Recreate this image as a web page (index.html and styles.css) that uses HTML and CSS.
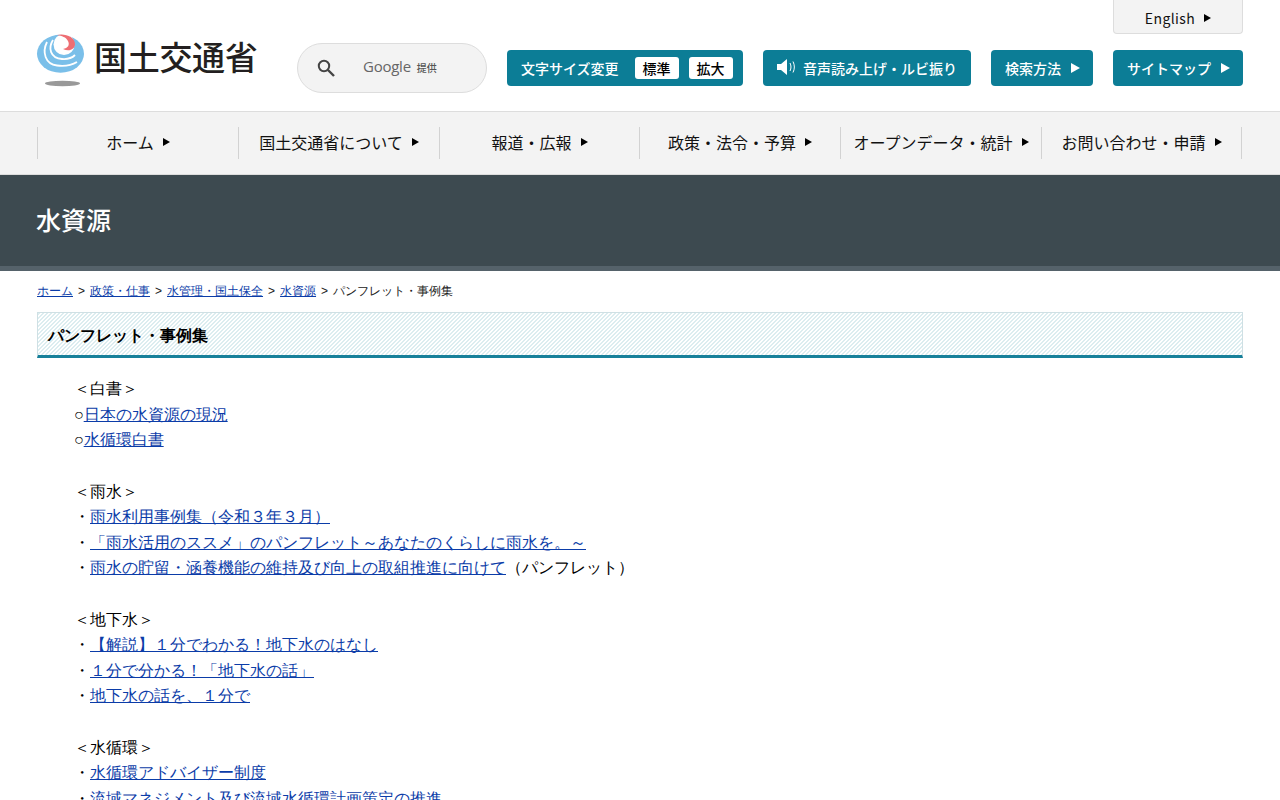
FILE: index.html
```html
<!DOCTYPE html>
<html lang="ja">
<head>
<meta charset="utf-8">
<title>パンフレット・事例集</title>
<link rel="stylesheet" href="styles.css">
</head>
<body>
<header class="header">
  <div class="header-top"><a class="english">English<span class="tri tri-dark"></span></a></div>
  <div class="header-main">
    <a class="logo">
      <svg class="logo-mark" width="50" height="54" viewBox="0 0 50 54">
        <ellipse cx="25.500" cy="49.500" rx="17.500" ry="2.700" fill="#999"/>
        <ellipse cx="23.500" cy="19.800" rx="23.500" ry="19" fill="#7abfe9"/>
        <circle cx="27" cy="10.500" r="10.500" fill="#fff"/>
        <path d="M16 6C11 14 13 24 25 25C31 25.500 35 24 38 21" fill="none" stroke="#fff" stroke-width="1.800"/>
        <path d="M10 8C5 18 8 30 20 31.500C28 32.500 35 31 40 28" fill="none" stroke="#fff" stroke-width="1.800"/>
        <path d="M20 1C28 -1 38 3 38 10C38 15.500 32 18 26 15C31 14 33 11 31 7C29 3 25 2 20 1Z" fill="#ee6e73"/>
      </svg>
      <span class="logo-text">国土交通省</span>
    </a>
    <div class="search">
      <svg class="search-icon" width="18" height="18" viewBox="0 0 18 18"><circle cx="7" cy="7" r="5.200" fill="none" stroke="#444" stroke-width="2"/><path d="M11 11l6 6" stroke="#444" stroke-width="2.400"/></svg>
      <span class="google">Google</span><span class="teikyo">提供</span>
    </div>
    <div class="tools">
      <div class="btn btn-size">文字サイズ変更<a class="size-chip size-first">標準</a><a class="size-chip">拡大</a></div>
      <a class="btn btn-voice">
        <svg class="speaker" width="19" height="16" viewBox="0 0 19 16"><path d="M0 5h4l6-5v16l-6-5H0z" fill="#fff"/><path d="M13 4c1.300 2.500 1.300 5.500 0 8M16 2.500c1.800 3.500 1.800 7.500 0 11" fill="none" stroke="#fff" stroke-width="1"/></svg>
        音声読み上げ・ルビ振り</a>
      <a class="btn btn-search">検索方法<span class="tri tri-light"></span></a>
      <a class="btn btn-map">サイトマップ<span class="tri tri-light"></span></a>
    </div>
  </div>
</header>
<nav class="gnav">
  <ul class="gnav-list">
    <li class="gnav-item"><a>ホーム<span class="tri tri-dark"></span></a></li>
    <li class="gnav-item"><a>国土交通省について<span class="tri tri-dark"></span></a></li>
    <li class="gnav-item"><a>報道・広報<span class="tri tri-dark"></span></a></li>
    <li class="gnav-item"><a>政策・法令・予算<span class="tri tri-dark"></span></a></li>
    <li class="gnav-item"><a>オープンデータ・統計<span class="tri tri-dark"></span></a></li>
    <li class="gnav-item"><a>お問い合わせ・申請<span class="tri tri-dark"></span></a></li>
  </ul>
</nav>
<div class="page-title"><p class="page-title-text">水資源</p></div>
<ol class="crumbs">
  <li><a href="#">ホーム</a></li><li class="sep">&gt;</li>
  <li><a href="#">政策・仕事</a></li><li class="sep">&gt;</li>
  <li><a href="#">水管理・国土保全</a></li><li class="sep">&gt;</li>
  <li><a href="#">水資源</a></li><li class="sep">&gt;</li>
  <li>パンフレット・事例集</li>
</ol>
<main class="main">
  <h1 class="heading">パンフレット・事例集</h1>
  <div class="content">
    ＜白書＞<br>
    ○<a href="#">日本の水資源の現況</a><br>
    ○<a href="#">水循環白書</a><br>
    <br>
    ＜雨水＞<br>
    ・<a href="#">雨水利用事例集（令和３年３月）</a><br>
    ・<a href="#">「雨水活用のススメ」のパンフレット～あなたのくらしに雨水を。～</a><br>
    ・<a href="#">雨水の貯留・涵養機能の維持及び向上の取組推進に向けて</a>（パンフレット）<br>
    <br>
    ＜地下水＞<br>
    ・<a href="#">【解説】１分でわかる！地下水のはなし</a><br>
    ・<a href="#">１分で分かる！「地下水の話」</a><br>
    ・<a href="#">地下水の話を、１分で</a><br>
    <br>
    ＜水循環＞<br>
    ・<a href="#">水循環アドバイザー制度</a><br>
    ・<a href="#">流域マネジメント及び流域水循環計画策定の推進</a>
  </div>
</main>
</body>
</html>
```
FILE: styles.css
```css
* { box-sizing: border-box; }
html, body { margin: 0; padding: 0; }
body {
  background: #fff;
  color: #000;
  font-family: "Liberation Sans", sans-serif;
  font-size: 16px;
  text-spacing-trim: space-all;
  overflow-x: hidden;
}
a { color: inherit; text-decoration: none; }

.header { height: 111px; padding: 0 37px; position: relative; }
.header-top { display: flex; justify-content: flex-end; height: 34px; }
.english {
  width: 130px; height: 34px;
  display: flex; align-items: center; justify-content: center;
  padding-top: 2px;
  background: #f3f3f3;
  border: 1px solid #ddd; border-top: 0;
  border-radius: 0 0 4px 4px;
  font-family: "Noto Sans CJK JP", sans-serif;
  font-size: 14px; letter-spacing: .4px; color: #111;
}
.header-main { display: flex; align-items: flex-start; }

.tri {
  display: inline-block; width: 0; height: 0;
  border-style: solid; border-width: 4px 0 4px 7px;
  border-color: transparent;
  margin-left: 9px;
}
.tri-dark { border-left-color: #000; }
.tri-light { border-left-color: #fff; border-width: 5px 0 5px 9px; margin-left: 10px; }

.logo { display: flex; width: 260px; }
.logo-mark { display: block; flex: none; overflow: visible; }
.logo-text {
  font-family: "Noto Sans CJK JP", sans-serif;
  font-size: 33px; font-weight: 500; line-height: 44px;
  letter-spacing: -.3px; color: #231f20;
  margin-left: 7px; white-space: nowrap;
}

.search {
  width: 190px; height: 50px; margin-top: 9px;
  display: flex; align-items: center;
  background: #f3f3f3; border: 1px solid #ddd; border-radius: 25px;
  padding-left: 19px;
}
.search-icon { flex: none; }
.google { font-family: "Open Sans", sans-serif; font-size: 15px; color: #666; margin-left: 28px; letter-spacing: -.25px; margin-top: -5px; }
.teikyo { font-family: "Noto Sans CJK JP", sans-serif; font-size: 10px; font-weight: 500; color: #555; margin-left: 6px; margin-top: -1px; }

.tools { display: flex; gap: 20px; margin: 16px 0 0 20px; }
.btn {
  height: 36px; display: flex; align-items: center;
  background: #0c7d96; color: #fff; border-radius: 4px;
  font-family: "Noto Sans CJK JP", sans-serif;
  font-size: 14px; font-weight: 500; white-space: nowrap;
}
.btn-size { width: 236px; padding-left: 14px; }
.size-chip {
  width: 44px; height: 22px; display: flex; align-items: center; justify-content: center;
  background: #fff; color: #000; border-radius: 3px; margin-left: 10px; font-size: 14px;
}
.size-first { margin-left: 16px; }
.btn-voice { width: 208px; padding-left: 14px; }
.speaker { margin-right: 7px; margin-top: -2px; }
.btn-search { width: 102px; padding-left: 14px; }
.btn-map { width: 130px; padding-left: 14px; }

.gnav { height: 64px; background: #f3f3f3; border-top: 1px solid #ddd; border-bottom: 1px solid #ddd; padding: 15px 37px 0; }
.gnav-list {
  list-style: none; margin: 0; padding: 0; height: 32px;
  display: grid; grid-template-columns: 201px 201px 200px 201px 201px 200px;
  width: 1205px;
  border-right: 1px solid #d2d2d2;
}
.gnav-item {
  border-left: 1px solid #d2d2d2;
  display: flex; align-items: center; justify-content: center;
  padding-bottom: 2px;
  font-family: "Noto Sans CJK JP", sans-serif;
  font-size: 16px; color: #111; white-space: nowrap;
}
.gnav-item a { display: flex; align-items: center; }

.page-title { height: 96px; background: #3d4a50; border-bottom: 5px solid #55626a; padding: 0 36px; display: flex; align-items: center; }
.page-title-text { margin: 0; color: #fff; font-family: "Noto Sans CJK JP", sans-serif; font-size: 25px; font-weight: 500; line-height: 89px; height: 91px; }

.crumbs {
  list-style: none; display: flex; gap: 5px;
  margin: 0; padding: 12px 37px 0; height: 41px;
  font-size: 12px; line-height: 16px; color: #222;
}
.crumbs a { color: #0b3ca8; text-decoration: underline; }

.main { padding: 0 37px; }
.heading {
  margin: 0; height: 46px; padding: 4px 10px 0;
  display: flex; align-items: center;
  font-size: 16px; font-weight: 700; color: #000;
  border: 1px solid #cfe0e4; border-bottom: 3px solid #16809a;
  background-image: linear-gradient(135deg, #dcedf0 25%, #fff 25%, #fff 50%, #dcedf0 50%, #dcedf0 75%, #fff 75%);
  background-size: 4px 4px;
}
.content { padding: 18.2px 0 0 37px; font-size: 16px; line-height: 25.6px; color: #000; }
.content a { color: #0b3ca8; text-decoration: underline; }
```
